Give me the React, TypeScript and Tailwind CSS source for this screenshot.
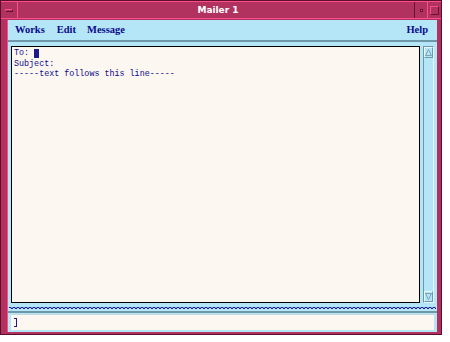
import React from "react";

const ink = "text-[#0a0a8a]";

function Wavy() {
  return (
    <div className="h-[2px] w-full flex flex-col">
      <div className="h-[1px] w-full bg-[repeating-linear-gradient(90deg,#1a1a9a_0_2px,#7a9ad0_2px_4px)]" />
      <div className="h-[1px] w-full bg-[repeating-linear-gradient(90deg,transparent_0_2px,#1a1a9a_2px_4px)]" />
    </div>
  );
}

function Arrow({ up }: { up: boolean }) {
  return (
    <div className="h-[11px] w-full flex items-center justify-center border border-[#e8f8ff] border-r-[#6e98a8] border-b-[#6e98a8]">
      <svg width="7" height="7" viewBox="0 0 7 7">
        {up ? (
          <polygon points="3.5,0.5 6.5,6.5 0.5,6.5" fill="#b4e6f8" stroke="#7aa2b0" strokeWidth="1" />
        ) : (
          <polygon points="0.5,0.5 6.5,0.5 3.5,6.5" fill="#b4e6f8" stroke="#7aa2b0" strokeWidth="1" />
        )}
      </svg>
    </div>
  );
}

export default function App() {
  return (
    <div className="w-[450px] h-[342px] bg-white">
      <div className="w-[442px] h-[335px] bg-[#b2325f] border border-[#5c0c2c] flex flex-col">
        {/* title bar */}
        <div className="h-[18px] flex border-t border-[#ff4f8a] border-b border-b-[#ff4f8a]">
          <div className="w-[17px] h-full border-r border-[#ff4f8a] flex items-center justify-center">
            <div className="w-[8px] h-[3px] bg-[#b2325f] border border-[#ff4f8a] border-b-[#6a1030] border-r-[#6a1030]" />
          </div>
          <div className="flex-1 flex items-center justify-center text-white font-bold text-[9px] leading-none font-['DejaVu_Sans',sans-serif] pl-[4px]">
            Mailer 1
          </div>
          <div className="w-[13px] h-full border-l border-[#6a1030] flex items-center justify-center">
            <div className="w-[3px] h-[3px] bg-[#ff4f8a] border border-[#6a1030]" />
          </div>
          <div className="w-[13px] h-full border-l border-[#ff4f8a] flex items-center justify-center mr-[1px]">
            <div className="w-[9px] h-[9px] border border-[#ff4f8a] border-b-[#6a1030] border-r-[#6a1030]" />
          </div>
        </div>
        {/* body */}
        <div className="flex-1 flex ml-[6px] mr-[4px] mt-[1px] mb-[2px] border-l border-[#ff4f8a]">
          <div className="flex-1 bg-[#b4e6f8] flex flex-col">
            {/* menu bar */}
            <div className={`h-[20px] flex items-center px-[7px] text-[10.5px] font-bold font-['Liberation_Serif',serif] ${ink}`}>
              <span className="mr-[12px]">Works</span>
              <span className="mr-[11px]">Edit</span>
              <span>Message</span>
              <span className="ml-auto mr-[2px]">Help</span>
            </div>
            <div className="h-[2px] bg-[#6e98a8]" />
            {/* content */}
            <div className="flex-1 flex pt-[4px] px-[3px] min-h-0">
              <div className={`flex-1 bg-[#fdf7f2] border border-black pl-[2px] pt-[1px] font-['Liberation_Mono',monospace] text-[8.4px] leading-[10.5px] ${ink}`}>
                <div className="flex items-center">
                  <span>To:&nbsp;</span>
                  <span className="inline-block w-[5px] h-[9px] bg-[#1a1a8a]" />
                </div>
                <div>Subject:</div>
                <div>-----text follows this line-----</div>
              </div>
              <div className="w-[11px] ml-[3px] flex flex-col border border-[#6e98a8] border-r-[#e8f8ff] border-b-[#e8f8ff]">
                <Arrow up />
                <div className="flex-1" />
                <Arrow up={false} />
              </div>
            </div>
            <div className="h-[4px]" />
            <div className="px-[1px]">
              <Wavy />
            </div>
            <div className="h-[2px]" />
            <div className="h-[2px] bg-[#6e98a8]" />
            <div className="h-[16px] mx-[3px] mt-[1px] bg-[#fdf7f2] border-t border-[#c8d8e0] flex items-center pl-[3px]">
              <div className="w-[3px] h-[9px] border border-l-0 border-[#1a1a8a]" />
            </div>
            <div className="h-[2px]" />
          </div>
        </div>
      </div>
    </div>
  );
}
